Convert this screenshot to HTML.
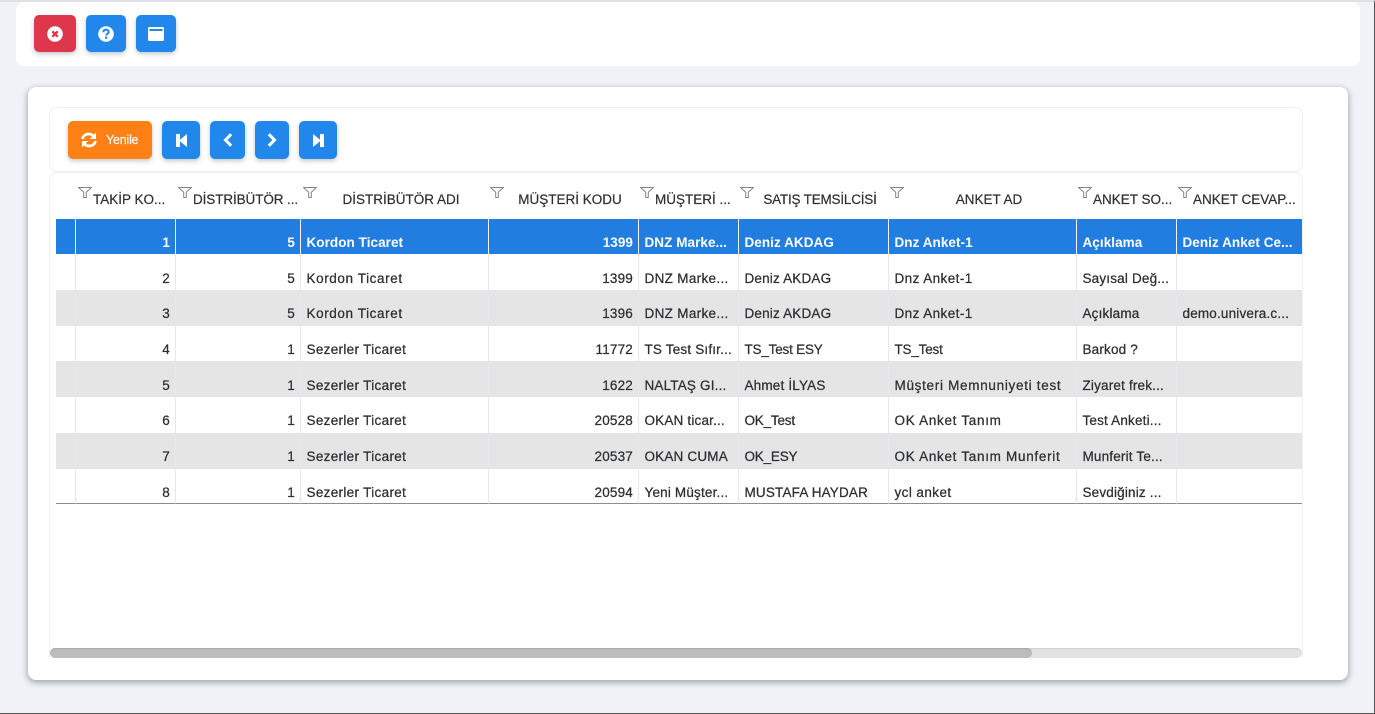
<!DOCTYPE html>
<html lang="tr"><head><meta charset="utf-8"><title>Anket</title>
<style>
*{box-sizing:border-box}
html,body{margin:0;padding:0}
body{width:1375px;height:714px;overflow:hidden;position:relative;background:#f0f2f7;font-family:"Liberation Sans","Noto Sans CJK JP",sans-serif;color:#212529}
.frame{position:absolute;left:0;top:0;width:1375px;height:714px;border-right:1px solid #555;border-bottom:1px solid #555;border-top:2px solid #dfe1e6;pointer-events:none;z-index:9}
.card{position:absolute;background:#fff}
.btn{position:absolute;border-radius:5px;background:#2287ea;box-shadow:0 2px 5px rgba(60,70,90,.3);display:flex;align-items:center;justify-content:center}
.red{background:#de374b}.org{background:#ff8015}
.h{position:absolute;top:191px;height:18px;line-height:18px;font-size:13.5px;color:#2f2f2f;white-space:nowrap;text-align:center;-webkit-text-stroke:.2px}
.f{position:absolute;top:187px}
table{position:absolute;left:56px;top:219px;width:1246px;border-collapse:separate;border-spacing:0;table-layout:fixed;font-size:13.5px;-webkit-text-stroke:.25px}
td{padding:0 5px 4px 5.5px;vertical-align:bottom;border-right:1px solid #e5e8f3;white-space:nowrap;overflow:hidden;letter-spacing:.18px;color:#2b2f33}
td.r{text-align:right}
td:last-child{border-right:0}
tr.p5 td{padding-bottom:5px}
tr.p3 td{padding-bottom:3px}
tr.g td{background:#e5e5e5}
tr.s td{background:#217ee0;color:#fff;font-weight:bold;border-right-color:#f0f4fb;-webkit-text-stroke:0;letter-spacing:.06px}
tr:last-child td{border-bottom:1px solid #8c8c8c}
td.a{letter-spacing:.6px}
td.b{letter-spacing:.7px}
td.c{letter-spacing:.32px}
td.d{letter-spacing:.42px}
td.e{letter-spacing:-.2px}
</style></head><body>
<div class="card" style="left:16px;top:2px;width:1344px;height:64px;border-radius:8px"></div>
<div class="btn red" style="left:34px;top:15px;width:42px;height:37px"><svg width="16" height="16" viewBox="0 0 16 16"><circle cx="8" cy="8" r="7.8" fill="#fff"/><path d="M5.300 5.300l5.400 5.400M10.700 5.300l-5.400 5.400" stroke="#de374b" stroke-width="2.300"/></svg></div>
<div class="btn" style="left:86px;top:15px;width:40px;height:37px"><svg width="16" height="16" viewBox="0 0 16 16"><circle cx="8" cy="8" r="7.800" fill="#fff"/><path d="M5.300 6.200C5.300 4.600 6.500 3.700 8 3.700s2.700.9 2.700 2.300c0 1.800-2.500 1.800-2.500 3.500" fill="none" stroke="#2287ea" stroke-width="2.100"/><rect x="7" y="10.600" width="2.300" height="2.200" fill="#2287ea"/></svg></div>
<div class="btn" style="left:136px;top:15px;width:40px;height:37px"><svg width="16" height="14" viewBox="0 0 16 14"><rect width="16" height="14" rx="1.500" fill="#fff"/><rect x="1.500" y="2" width="13" height="2" fill="#2287ea"/></svg></div>

<div class="card" style="left:28px;top:87px;width:1320px;height:593px;border-radius:8px;box-shadow:0 2px 6px 1px rgba(70,75,90,.42)"></div>
<div class="card" style="left:49px;top:107px;width:1254px;height:65px;border:1px solid #eeeff3;border-radius:8px"></div>
<div class="card" style="left:49px;top:172px;width:1254px;height:486px;border:1px solid #eeeff4;border-bottom:0;border-radius:8px 8px 0 0"></div>

<div class="btn org" style="left:68px;top:121px;width:84px;height:38px;justify-content:flex-start;padding-left:13px"><svg width="16" height="16" viewBox="0 0 16 16" fill="none" stroke="#fff" stroke-width="2.700"><path d="M1.500 7C2 4 4.500 2 7.800 2c2.200 0 4 1 5.200 2.700"/><path d="M14.500 9c-.5 3-3 5-6.300 5-2.200 0-4-1-5.200-2.700"/><path d="M15 .5v6.500H8.800z" fill="#fff" stroke="none"/><path d="M1 15.500V9h6.200z" fill="#fff" stroke="none"/></svg><span style="color:#fff;font-size:12.500px;margin-left:9px;letter-spacing:-.2px;-webkit-text-stroke:.15px">Yenile</span></div>
<div class="btn" style="left:162px;top:121px;width:38px;height:38px"><svg width="11" height="13" viewBox="0 0 11 13" fill="#fff"><rect x="0" y="0" width="4" height="13"/><path d="M11 0v13L3 6.500z"/></svg></div>
<div class="btn" style="left:210px;top:121px;width:35px;height:38px"><svg width="10" height="14" viewBox="0 0 10 14" fill="none" stroke="#fff" stroke-width="3"><path d="M8.200 1.200L2.500 7l5.700 5.800"/></svg></div>
<div class="btn" style="left:255px;top:121px;width:34px;height:38px"><svg width="10" height="14" viewBox="0 0 10 14" fill="none" stroke="#fff" stroke-width="3"><path d="M1.800 1.200L7.500 7l-5.700 5.800"/></svg></div>
<div class="btn" style="left:299px;top:121px;width:38px;height:38px"><svg width="11" height="13" viewBox="0 0 11 13" fill="#fff"><rect x="7" y="0" width="4" height="13"/><path d="M0 0v13l8-6.500z"/></svg></div>

<svg class="f" style="left:78px" width="14" height="11" viewBox="0 0 14 11" fill="none" stroke="#858585"><path d="M.6.500h12.800L8.300 5.200v5.300H5.700V5.200z"/></svg>
<svg class="f" style="left:178px" width="14" height="11" viewBox="0 0 14 11" fill="none" stroke="#858585"><path d="M.6.500h12.800L8.300 5.200v5.300H5.700V5.200z"/></svg>
<svg class="f" style="left:303px" width="14" height="11" viewBox="0 0 14 11" fill="none" stroke="#858585"><path d="M.6.500h12.800L8.300 5.200v5.300H5.700V5.200z"/></svg>
<svg class="f" style="left:490px" width="14" height="11" viewBox="0 0 14 11" fill="none" stroke="#858585"><path d="M.6.500h12.800L8.300 5.200v5.300H5.700V5.200z"/></svg>
<svg class="f" style="left:640px" width="14" height="11" viewBox="0 0 14 11" fill="none" stroke="#858585"><path d="M.6.500h12.800L8.300 5.200v5.300H5.700V5.200z"/></svg>
<svg class="f" style="left:740px" width="14" height="11" viewBox="0 0 14 11" fill="none" stroke="#858585"><path d="M.6.500h12.800L8.300 5.200v5.300H5.700V5.200z"/></svg>
<svg class="f" style="left:890px" width="14" height="11" viewBox="0 0 14 11" fill="none" stroke="#858585"><path d="M.6.500h12.800L8.300 5.200v5.300H5.700V5.200z"/></svg>
<svg class="f" style="left:1078px" width="14" height="11" viewBox="0 0 14 11" fill="none" stroke="#858585"><path d="M.6.500h12.800L8.300 5.200v5.300H5.700V5.200z"/></svg>
<svg class="f" style="left:1178px" width="14" height="11" viewBox="0 0 14 11" fill="none" stroke="#858585"><path d="M.6.500h12.800L8.300 5.200v5.300H5.700V5.200z"/></svg>

<div class="h" style="left:93px">TAKİP KO...</div>
<div class="h" style="left:193px;letter-spacing:-.1px">DİSTRİBÜTÖR ...</div>
<div class="h" style="left:301px;width:200px">DİSTRİBÜTÖR ADI</div>
<div class="h" style="left:495px;width:150px">MÜŞTERİ KODU</div>
<div class="h" style="left:655px">MÜŞTERİ ...</div>
<div class="h" style="left:745px;width:150px;letter-spacing:-.2px">SATIŞ TEMSİLCİSİ</div>
<div class="h" style="left:895px;width:188px">ANKET AD</div>
<div class="h" style="left:1093px">ANKET SO...</div>
<div class="h" style="left:1193px">ANKET CEVAP...</div>

<table>
<colgroup><col style="width:20px"><col style="width:100px"><col style="width:125px"><col style="width:188px"><col style="width:150px"><col style="width:100px"><col style="width:150px"><col style="width:188px"><col style="width:100px"><col style="width:125px"></colgroup>
<tr class="s" style="height:35px"><td></td><td class="r">1</td><td class="r">5</td><td>Kordon Ticaret</td><td class="r">1399</td><td>DNZ Marke...</td><td>Deniz AKDAG</td><td>Dnz Anket-1</td><td>Açıklama</td><td>Deniz Anket Ce...</td></tr>
<tr style="height:36px"><td></td><td class="r">2</td><td class="r">5</td><td class="a">Kordon Ticaret</td><td class="r">1399</td><td class="c">DNZ Marke...</td><td>Deniz AKDAG</td><td class="d">Dnz Anket-1</td><td>Sayısal Değ...</td><td></td></tr>
<tr class="g p5" style="height:36px"><td></td><td class="r">3</td><td class="r">5</td><td class="a">Kordon Ticaret</td><td class="r">1396</td><td class="c">DNZ Marke...</td><td>Deniz AKDAG</td><td class="d">Dnz Anket-1</td><td>Açıklama</td><td>demo.univera.c...</td></tr>
<tr style="height:35px"><td></td><td class="r">4</td><td class="r">1</td><td class="c">Sezerler Ticaret</td><td class="r">11772</td><td>TS Test Sıfır...</td><td class="e">TS_Test ESY</td><td class="e">TS_Test</td><td>Barkod ?</td><td></td></tr>
<tr class="g" style="height:36px"><td></td><td class="r">5</td><td class="r">1</td><td class="c">Sezerler Ticaret</td><td class="r">1622</td><td>NALTAŞ GI...</td><td>Ahmet İLYAS</td><td class="b">Müşteri Memnuniyeti test</td><td>Ziyaret frek...</td><td></td></tr>
<tr class="p5" style="height:36px"><td></td><td class="r">6</td><td class="r">1</td><td class="c">Sezerler Ticaret</td><td class="r">20528</td><td>OKAN ticar...</td><td class="e">OK_Test</td><td class="b">OK Anket Tanım</td><td>Test Anketi...</td><td></td></tr>
<tr class="g p5" style="height:36px"><td></td><td class="r">7</td><td class="r">1</td><td class="c">Sezerler Ticaret</td><td class="r">20537</td><td>OKAN CUMA</td><td class="e">OK_ESY</td><td class="b">OK Anket Tanım Munferit</td><td>Munferit Te...</td><td></td></tr>
<tr class="p3" style="height:35px"><td></td><td class="r">8</td><td class="r">1</td><td class="c">Sezerler Ticaret</td><td class="r">20594</td><td>Yeni Müşter...</td><td>MUSTAFA HAYDAR</td><td class="d">ycl anket</td><td>Sevdiğiniz ...</td><td></td></tr>
</table>

<div style="position:absolute;left:50px;top:648px;width:1252px;height:10px;border-radius:5px;background:#e3e3e3;box-shadow:inset 0 1px 1px rgba(0,0,0,.1)"></div>
<div style="position:absolute;left:50px;top:648px;width:982px;height:10px;border-radius:5px;background:#bcbcbc;box-shadow:inset 0 1px 1px rgba(0,0,0,.1)"></div>
<div class="frame"></div>
</body></html>
